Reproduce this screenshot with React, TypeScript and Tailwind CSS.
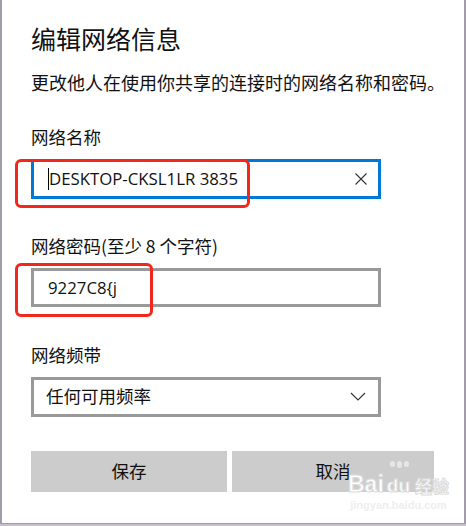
import React from "react";

const cjk = "font-['Microsoft_YaHei','Noto_Sans_CJK_SC',sans-serif]";
const latin = "font-['Open_Sans','Noto_Sans_CJK_SC',sans-serif]";

function ClearIcon() {
  return (
    <svg width="14" height="14" viewBox="0 0 14 14" className="shrink-0">
      <path d="M1.5 1.5 L12.5 12.5 M12.5 1.5 L1.5 12.5" stroke="#333" strokeWidth="1.1" fill="none" />
    </svg>
  );
}

function Chevron() {
  return (
    <svg width="16" height="9" viewBox="0 0 16 9" className="shrink-0">
      <path d="M1 1 L8 8 L15 1" stroke="#333" strokeWidth="1.1" fill="none" />
    </svg>
  );
}

export default function App() {
  return (
    <div className={`relative w-[466px] h-[526px] bg-[#c4bfca] overflow-hidden ${cjk}`}>
      {/* dialog */}
      <div className="w-[466px] h-[524px] bg-white border-l-2 border-r-2 border-b border-[#a29ca8] pl-[29px] flex flex-col text-[#111]">
        <h1 className="mt-[26px] text-[25px] leading-[25px] font-normal">编辑网络信息</h1>
        <p className="mt-[22px] text-[18px] leading-[18px]">更改他人在使用你共享的连接时的网络名称和密码。</p>

        <label className="mt-[37px] text-[17.5px] leading-[17.5px]">网络名称</label>
        <div className="mt-[13px] w-[350px] h-[40px] border-[3px] border-[#0078d7] flex items-center pl-[14px] pr-[10px]">
          <span className="w-px h-[22px] bg-black" />
          <span className={`flex-1 text-[16.8px] ${latin}`}>DESKTOP-CKSL1LR 3835</span>
          <ClearIcon />
        </div>

        <label className="mt-[38px] text-[17.5px] leading-[17.5px]">网络密码(至少 8 个字符)</label>
        <div className="mt-[14px] w-[350px] h-[39px] border-[3px] border-[#999999] flex items-center pl-[14px]">
          <span className={`text-[16.8px] ${latin}`}>9227C8{"{"}j</span>
        </div>

        <label className="mt-[39px] text-[17.5px] leading-[17.5px]">网络频带</label>
        <div className="mt-[13px] w-[350px] h-[40px] border-[3px] border-[#999999] flex items-center pl-[12px] pr-[12px]">
          <span className="flex-1 text-[17.5px]">任何可用频率</span>
          <Chevron />
        </div>

        <div className="mt-[34px] flex gap-[5px]">
          <button className="w-[196px] h-[41px] bg-[#cccccc] text-[17.5px]">保存</button>
          <button className="w-[202px] h-[41px] bg-[#cccccc] text-[17.5px]">取消</button>
        </div>
      </div>

      {/* red annotation boxes */}
      <div className="absolute left-[15px] top-[159px] w-[235px] h-[49px] border-[3px] border-[#f2271c] rounded-[6px]" />
      <div className="absolute left-[15px] top-[263px] w-[138px] h-[54px] border-[3px] border-[#f2271c] rounded-[6px]" />

      {/* watermark */}
      <div className="absolute left-[348px] top-[474px] flex flex-col items-center pointer-events-none">
        <div className="flex items-end gap-[3px] font-['Liberation_Sans',sans-serif] font-bold">
          <span className="text-[23px] leading-[21px] text-white [-webkit-text-stroke:1px_#dcdcdc]">Bai</span>
          <span className="relative text-[19px] leading-[19px] text-white [-webkit-text-stroke:1px_#dcdcdc]">
            du
            <span className="absolute -top-[15px] left-[3px] flex gap-[2px]">
              <span className="w-[5px] h-[6px] rounded-full bg-[#e6e6e6]" />
              <span className="w-[5px] h-[7px] rounded-full bg-[#e6e6e6]" />
              <span className="w-[5px] h-[6px] rounded-full bg-[#e6e6e6]" />
            </span>
          </span>
          <span className={`ml-[2px] text-[17px] leading-[18px] text-white [-webkit-text-stroke:1px_#dcdcdc] ${cjk}`}>经验</span>
        </div>
        <span className="mt-[5px] text-[11px] leading-[11px] font-['Liberation_Sans',sans-serif] font-bold text-[#eeeeee]">jingyan.baidu.com</span>
      </div>
    </div>
  );
}
